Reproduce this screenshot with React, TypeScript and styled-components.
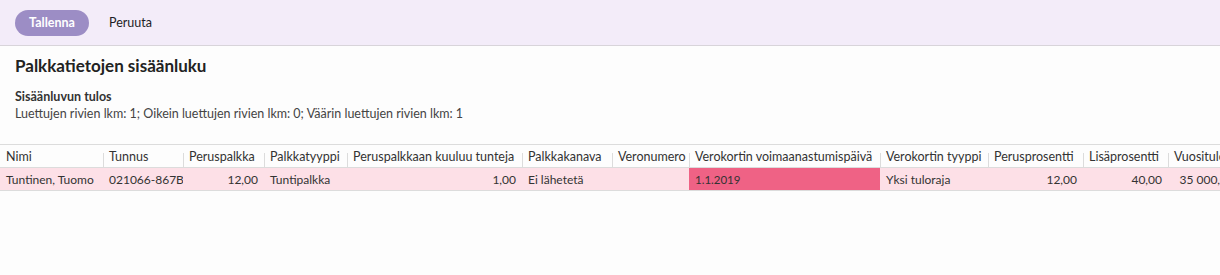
import React from "react";
import styled, { createGlobalStyle } from "styled-components";

const GlobalStyle = createGlobalStyle`
  body {
    margin: 0;
    background: #fdfdfd;
    font-family: Lato, "Open Sans", sans-serif;
    color: #333;
  }
`;

const Toolbar = styled.div`
  height: 46px;
  box-sizing: border-box;
  display: flex;
  align-items: center;
  gap: 20px;
  padding: 0 15px;
  background: #f3ecf9;
  border-bottom: 1px solid #d8d4da;
`;

const PrimaryButton = styled.button`
  height: 26px;
  width: 74px;
  border: none;
  border-radius: 13px;
  background: #9c8dc5;
  color: #fff;
  font-family: inherit;
  font-size: 12.5px;
  font-weight: 700;
  padding: 0;
`;

const TextButton = styled.button`
  border: none;
  background: none;
  padding: 0;
  font-family: inherit;
  font-size: 12.5px;
  color: #1d1d26;
`;

const Content = styled.div`
  padding: 9px 15px 0;
`;

const Title = styled.h1`
  margin: 0;
  font-size: 17px;
  font-weight: 700;
  color: #222;
  line-height: 22px;
`;

const ResultBlock = styled.div`
  margin-top: 11px;
  font-size: 12.5px;
  line-height: 17px;
  color: #444;
`;

const ResultTitle = styled.div`
  font-weight: 700;
  color: #333;
`;

const TableWrap = styled.div`
  margin-top: 22px;
  overflow: hidden;
`;

const Table = styled.table`
  border-collapse: collapse;
  table-layout: fixed;
  width: 1240px;
  font-size: 12.5px;
  border-top: 1px solid #dcdcdc;
`;

const Th = styled.th<{ $right?: boolean }>`
  position: relative;
  height: 22px;
  padding: 0 6px;
  text-align: ${(p) => (p.$right ? "right" : "left")};
  font-weight: 400;
  color: #333;
  white-space: nowrap;
  overflow: hidden;
  border-bottom: 1px solid #dcdcdc;
  &:not(:first-child)::before {
    content: "";
    position: absolute;
    left: 0;
    bottom: 0;
    height: 14px;
    width: 1px;
    background: #dcdcdc;
  }
`;

const Tr = styled.tr`
  background: #fde0e7;
`;

const Td = styled.td<{ $right?: boolean; $error?: boolean }>`
  height: 22px;
  padding: 0 6px;
  text-align: ${(p) => (p.$right ? "right" : "left")};
  color: #333;
  white-space: nowrap;
  overflow: hidden;
  border-bottom: 1px solid #dcdcdc;
  background: ${(p) => (p.$error ? "#ef6285" : "transparent")};
  font-size: ${(p) => (p.$error ? "11.5px" : "12px")};
`;

const columns = [
  { title: "Nimi", width: 103, value: "Tuntinen, Tuomo" },
  { title: "Tunnus", width: 80, value: "021066-867B" },
  { title: "Peruspalkka", width: 81, value: "12,00", right: true },
  { title: "Palkkatyyppi", width: 83, value: "Tuntipalkka" },
  { title: "Peruspalkkaan kuuluu tunteja", width: 175, value: "1,00", right: true },
  { title: "Palkkakanava", width: 90, value: "Ei lähetetä" },
  { title: "Veronumero", width: 77, value: "" },
  { title: "Verokortin voimaanastumispäivä", width: 191, value: "1.1.2019", error: true },
  { title: "Verokortin tyyppi", width: 108, value: "Yksi tuloraja" },
  { title: "Perusprosentti", width: 95, value: "12,00", right: true },
  { title: "Lisäprosentti", width: 85, value: "40,00", right: true },
  { title: "Vuositulorajat", width: 72, value: "35 000,00", right: true },
];

export default function App() {
  return (
    <>
      <GlobalStyle />
      <Toolbar>
        <PrimaryButton>Tallenna</PrimaryButton>
        <TextButton>Peruuta</TextButton>
      </Toolbar>
      <Content>
        <Title>Palkkatietojen sisäänluku</Title>
        <ResultBlock>
          <ResultTitle>Sisäänluvun tulos</ResultTitle>
          <div>
            Luettujen rivien lkm: 1; Oikein luettujen rivien lkm: 0; Väärin luettujen rivien lkm: 1
          </div>
        </ResultBlock>
      </Content>
      <TableWrap>
        <Table>
          <colgroup>
            {columns.map((c) => (
              <col key={c.title} style={{ width: c.width }} />
            ))}
          </colgroup>
          <thead>
            <tr>
              {columns.map((c) => (
                <Th key={c.title}>{c.title}</Th>
              ))}
            </tr>
          </thead>
          <tbody>
            <Tr>
              {columns.map((c) => (
                <Td key={c.title} $right={c.right} $error={c.error}>
                  {c.value}
                </Td>
              ))}
            </Tr>
          </tbody>
        </Table>
      </TableWrap>
    </>
  );
}
